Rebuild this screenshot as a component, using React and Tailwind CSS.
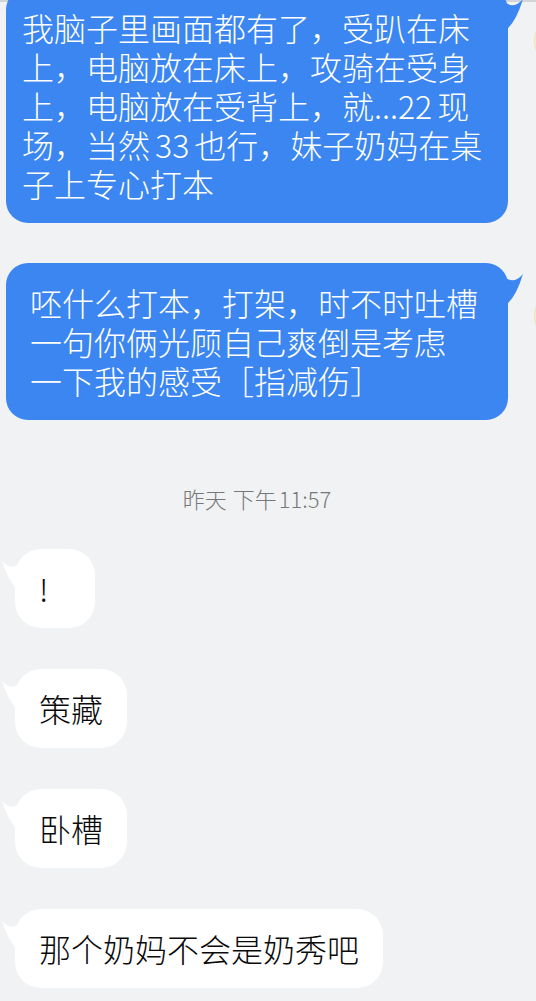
import React from "react";

function RightTail() {
  return (
    <svg
      className="absolute top-0 -right-[16px] w-[30px] h-[48px]"
      viewBox="0 0 30 48"
    >
      <path
        d="M0 44 L0 6 L6 8 Q17 25 29 11 Q22 34 12 42 L0 44 Z"
        fill="#3b86f1"
      />
    </svg>
  );
}

function LeftTail() {
  return (
    <svg
      className="absolute top-0 -left-[14px] w-[30px] h-[48px] -scale-x-100"
      viewBox="0 0 30 48"
    >
      <path
        d="M0 44 L0 6 L6 8 Q17 25 29 12 Q22 34 12 42 L0 44 Z"
        fill="#ffffff"
      />
    </svg>
  );
}

function RightMsg({ lines, pad, className }) {
  return (
    <div className={"flex items-start " + className}>
      <div
        className={
          "relative ml-[6px] w-[502px] shrink-0 rounded-[22px] bg-[#3b86f1] py-5 text-white text-[32px] leading-[39px] font-light " +
          pad
        }
      >
        <RightTail />
        <div className="relative">
          {lines.map((l, i) => (
            <div key={i} className="whitespace-nowrap">
              {l}
            </div>
          ))}
        </div>
      </div>
      <div className="ml-[26px] mt-[24px] h-[58px] w-[58px] shrink-0 rounded-full bg-[#f4eed2] border border-[#ebe3be]" />
    </div>
  );
}

function LeftMsg({ text, className }) {
  return (
    <div className={"flex " + className}>
      <div className="relative ml-[15px] min-w-[80px] rounded-[26px] bg-white py-5 pl-6 pr-6 text-[32px] leading-[39px] font-light text-[#0a0a0a]">
        <LeftTail />
        <div className="relative whitespace-nowrap">{text}</div>
      </div>
    </div>
  );
}

export default function App() {
  return (
    <div className="relative h-[1001px] w-[536px] overflow-hidden bg-[#f1f2f4] font-['Noto_Sans_CJK_SC','Noto_Sans',sans-serif]">
      <div className="h-[2px] bg-[#d3d4d7]" />
      <div className="flex flex-col">
        <RightMsg
          className="-mt-[14px]"
          pad="pl-4"
          lines={[
            "我脑子里画面都有了，受趴在床",
            "上，电脑放在床上，攻骑在受身",
            <>
              上，电脑放在受背上，就...22<span className="ml-[5px]">现</span>
            </>,
            <>
              场，当然<span className="mx-[5px]">33</span>也行，妹子奶妈在桌
            </>,
            "子上专心打本",
          ]}
        />
        <RightMsg
          className="mt-[40px]"
          pad="pl-6"
          lines={[
            "呸什么打本，打架，时不时吐槽",
            "一句你俩光顾自己爽倒是考虑",
            "一下我的感受［指减伤］",
          ]}
        />
        <div className="mt-[64px] pr-[22px] text-center text-[22px] leading-[28px] font-light text-[#777777]">
          昨天<span className="ml-[6px]">下午</span>
          <span className="ml-[2px]">11:57</span>
        </div>
        <LeftMsg className="mt-[37px]" text="!" />
        <LeftMsg className="mt-[41px]" text="策藏" />
        <LeftMsg className="mt-[41px]" text="卧槽" />
        <LeftMsg className="mt-[41px]" text="那个奶妈不会是奶秀吧" />
      </div>
    </div>
  );
}
